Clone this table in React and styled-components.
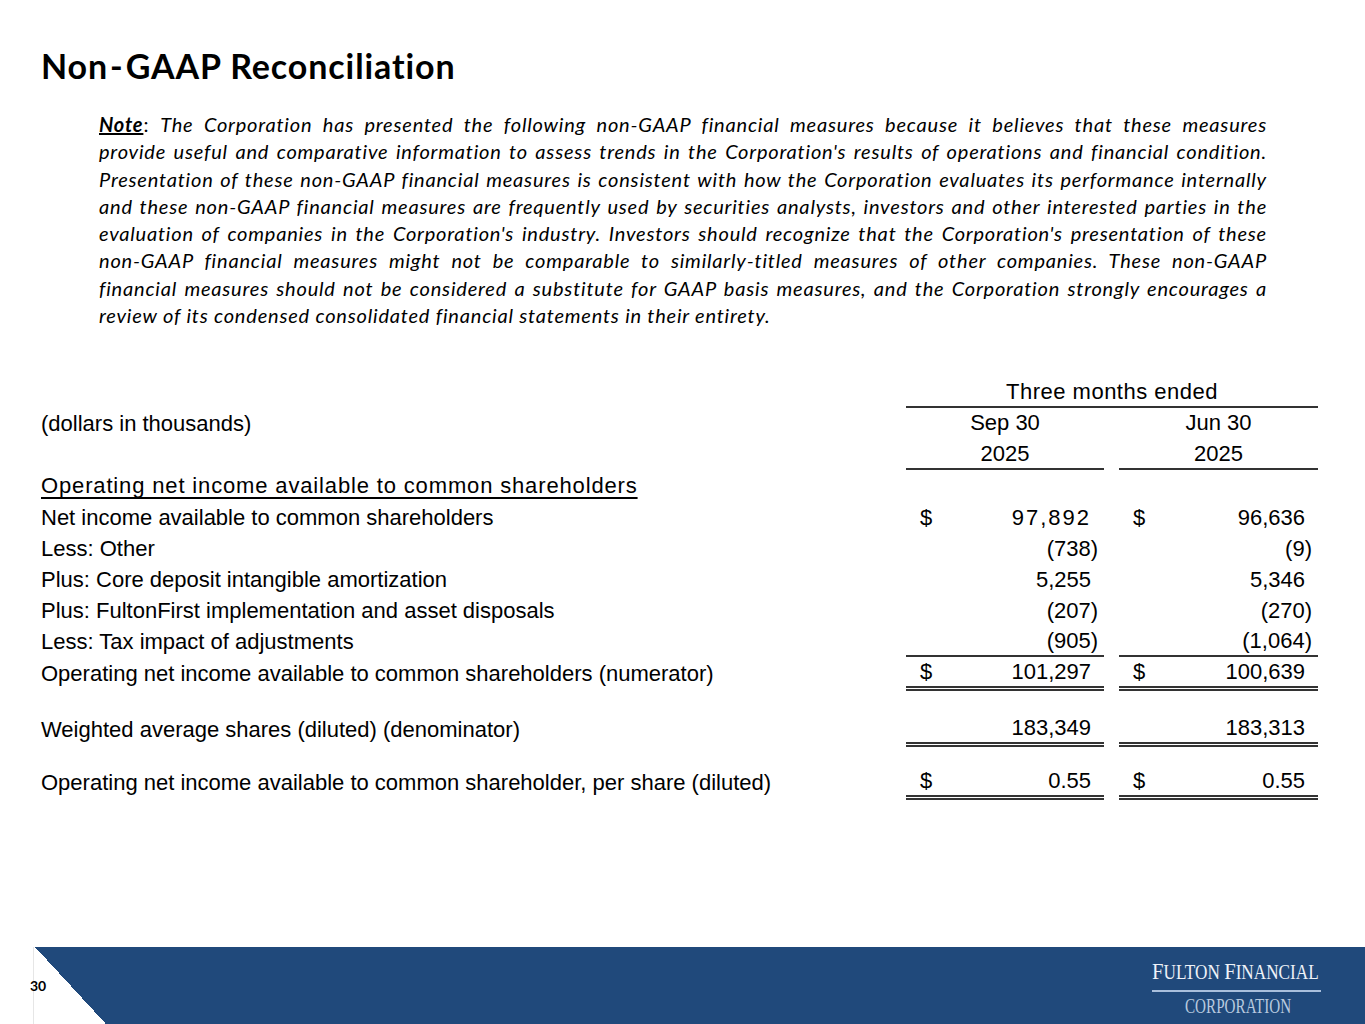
import React from "react";
import styled, { createGlobalStyle } from "styled-components";

const Global = createGlobalStyle`
  html, body { margin: 0; padding: 0; background: #fff; }
  body { width: 1365px; height: 1024px; overflow: hidden; }
`;

const Slide = styled.div`
  width: 1365px;
  height: 1024px;
  display: flex;
  flex-direction: column;
  background: #fff;
  color: #000;
`;

const Title = styled.h1`
  margin: 0;
  padding: 46px 0 0 41px;
  font-family: Lato, "Open Sans", sans-serif;
  font-weight: 700;
  font-size: 34px;
  line-height: 40px;
  letter-spacing: 0.9px;
`;

const Hyphen = styled.span`
  margin: 0 2px;
`;

const Note = styled.div`
  margin: 25px 0 0 99px;
  width: 1168px;
  font-family: Lato, "Open Sans", sans-serif;
  font-style: italic;
  font-size: 20px;
  letter-spacing: 0.8px;
  line-height: 27.3px;
`;

const NoteLine = styled.div`
  text-align: justify;
  text-align-last: ${(p) => (p.$last ? "left" : "justify")};
`;

const NoteLabel = styled.span`
  font-weight: 700;
  text-decoration: underline;
`;

const Colon = styled.span`
  font-style: normal;
`;

const Table = styled.div`
  margin: 48px 0 0 41px;
  width: 1277px;
  font-family: "Liberation Sans", Arial, sans-serif;
  font-size: 22px;
`;

const Row = styled.div`
  display: grid;
  grid-template-columns: 850px 198px 199px;
  column-gap: 15px;
  height: ${(p) => p.$h || 31}px;
  margin-top: ${(p) => p.$mt || 0}px;
`;

const Label = styled.div`
  align-self: center;
  white-space: nowrap;
  ${(p) =>
    p.$section &&
    `letter-spacing: 0.85px; text-decoration: underline; text-decoration-thickness: 2px; text-underline-offset: 4px;`}
`;

const HeadCell = styled.div`
  grid-column: ${(p) => p.$span || "auto"};
  display: flex;
  align-items: center;
  justify-content: center;
  letter-spacing: ${(p) => (p.$span ? "0.5px" : "0")};
  border-bottom: ${(p) => (p.$rule ? "2px solid #333" : "2px solid transparent")};
`;

const rules = {
  single: "2px solid #333",
  double: "5px double #333",
};

const ValueCell = styled.div`
  display: flex;
  align-items: center;
  justify-content: space-between;
  padding: 0 ${(p) => (p.$neg ? 6 : 13)}px 0 14px;
  border-bottom: ${(p) => rules[p.$rule] || "none"};
  white-space: nowrap;
`;

const Num = styled.span`
  margin-left: auto;
  letter-spacing: ${(p) => p.$ls || 0}px;
`;

const Footer = styled.footer`
  margin-top: auto;
  height: 77px;
  display: grid;
  grid-template-columns: 33px 72px 1fr;
`;

const PageNum = styled.div`
  font-family: Lato, "Open Sans", sans-serif;
  font-weight: 700;
  font-size: 14px;
  display: flex;
  align-items: center;
  padding-left: 30px;
  width: 20px;
  position: relative;
  z-index: 1;
`;

const Corner = styled.div`
  border-left: 1px solid #e6e6e6;
  background: linear-gradient(to top right, #fff 50%, #20497b 50%) 1px 0 / 71px 100% no-repeat;
`;

const Band = styled.div`
  background: #20497b;
  display: flex;
  justify-content: flex-end;
  align-items: flex-start;
  padding: 7px 41px 0 0;
`;

const serif = "'Liberation Serif', 'Times New Roman', serif";

function Logo() {
  return (
    <svg width="174" height="68" viewBox="0 0 174 68" aria-label="Fulton Financial Corporation">
      <g transform="translate(2 0) scale(0.86 1)">
        <text x="0" y="25" fill="#eef2f8" fontFamily={serif}>
          <tspan fontSize="24">F</tspan>
          <tspan fontSize="20">ULTON </tspan>
          <tspan fontSize="24">F</tspan>
          <tspan fontSize="20">INANCIAL</tspan>
        </text>
      </g>
      <rect x="2" y="36" width="169" height="2" fill="#a9bfdc" />
      <g transform="translate(35 0) scale(0.74 1)">
        <text x="0" y="59" fill="#b8c9df" fontSize="20.5" fontFamily={serif}>
          CORPORATION
        </text>
      </g>
    </svg>
  );
}

const noteLines = [
  "The Corporation has presented the following non-GAAP financial measures because it believes that these measures",
  "provide useful and comparative information to assess trends in the Corporation's results of operations and financial condition.",
  "Presentation of these non-GAAP financial measures is consistent with how the Corporation evaluates its performance internally",
  "and these non-GAAP financial measures are frequently used by securities analysts, investors and other interested parties in the",
  "evaluation of companies in the Corporation's industry. Investors should recognize that the Corporation's presentation of these",
  "non-GAAP financial measures might not be comparable to similarly-titled measures of other companies. These non-GAAP",
  "financial measures should not be considered a substitute for GAAP basis measures, and the Corporation strongly encourages a",
  "review of its condensed consolidated financial statements in their entirety.",
];

const rows = [
  { label: "Net income available to common shareholders", a: "97,892", b: "96,636", dollar: true, lsA: 2 },
  { label: "Less: Other", a: "(738)", b: "(9)" },
  { label: "Plus: Core deposit intangible amortization", a: "5,255", b: "5,346" },
  { label: "Plus: FultonFirst implementation and asset disposals", a: "(207)", b: "(270)" },
  { label: "Less: Tax impact of adjustments", a: "(905)", b: "(1,064)", rule: "single" },
];

function Value({ v, dollar, rule, ls }) {
  const neg = v.startsWith("(");
  return (
    <ValueCell $neg={neg} $rule={rule}>
      {dollar && <span>$</span>}
      <Num $ls={ls}>{v}</Num>
    </ValueCell>
  );
}

export default function App() {
  return (
    <>
      <Global />
      <Slide>
        <Title>
          Non<Hyphen>-</Hyphen>GAAP Reconciliation
        </Title>
        <Note>
          {noteLines.map((t, i) => (
            <NoteLine key={i} $last={i === noteLines.length - 1}>
              {i === 0 && (
                <>
                  <NoteLabel>Note</NoteLabel>
                  <Colon>: </Colon>
                </>
              )}
              {t}
            </NoteLine>
          ))}
        </Note>

        <Table>
          <Row>
            <Label />
            <HeadCell $span="2 / 4" $rule>
              Three months ended
            </HeadCell>
          </Row>
          <Row>
            <Label>(dollars in thousands)</Label>
            <HeadCell>Sep 30</HeadCell>
            <HeadCell>Jun 30</HeadCell>
          </Row>
          <Row>
            <Label />
            <HeadCell $rule>2025</HeadCell>
            <HeadCell $rule>2025</HeadCell>
          </Row>
          <Row $h={32}>
            <Label $section>Operating net income available to common shareholders</Label>
          </Row>
          {rows.map((r) => (
            <Row key={r.label}>
              <Label>{r.label}</Label>
              <Value v={r.a} dollar={r.dollar} rule={r.rule} ls={r.lsA} />
              <Value v={r.b} dollar={r.dollar} rule={r.rule} />
            </Row>
          ))}
          <Row $h={34}>
            <Label>Operating net income available to common shareholders (numerator)</Label>
            <Value v="101,297" dollar rule="double" />
            <Value v="100,639" dollar rule="double" />
          </Row>
          <Row $h={34} $mt={22}>
            <Label>Weighted average shares (diluted) (denominator)</Label>
            <Value v="183,349" rule="double" />
            <Value v="183,313" rule="double" />
          </Row>
          <Row $h={34} $mt={19}>
            <Label>Operating net income available to common shareholder, per share (diluted)</Label>
            <Value v="0.55" dollar rule="double" />
            <Value v="0.55" dollar rule="double" />
          </Row>
        </Table>

        <Footer>
          <PageNum>30</PageNum>
          <Corner />
          <Band>
            <Logo />
          </Band>
        </Footer>
      </Slide>
    </>
  );
}
